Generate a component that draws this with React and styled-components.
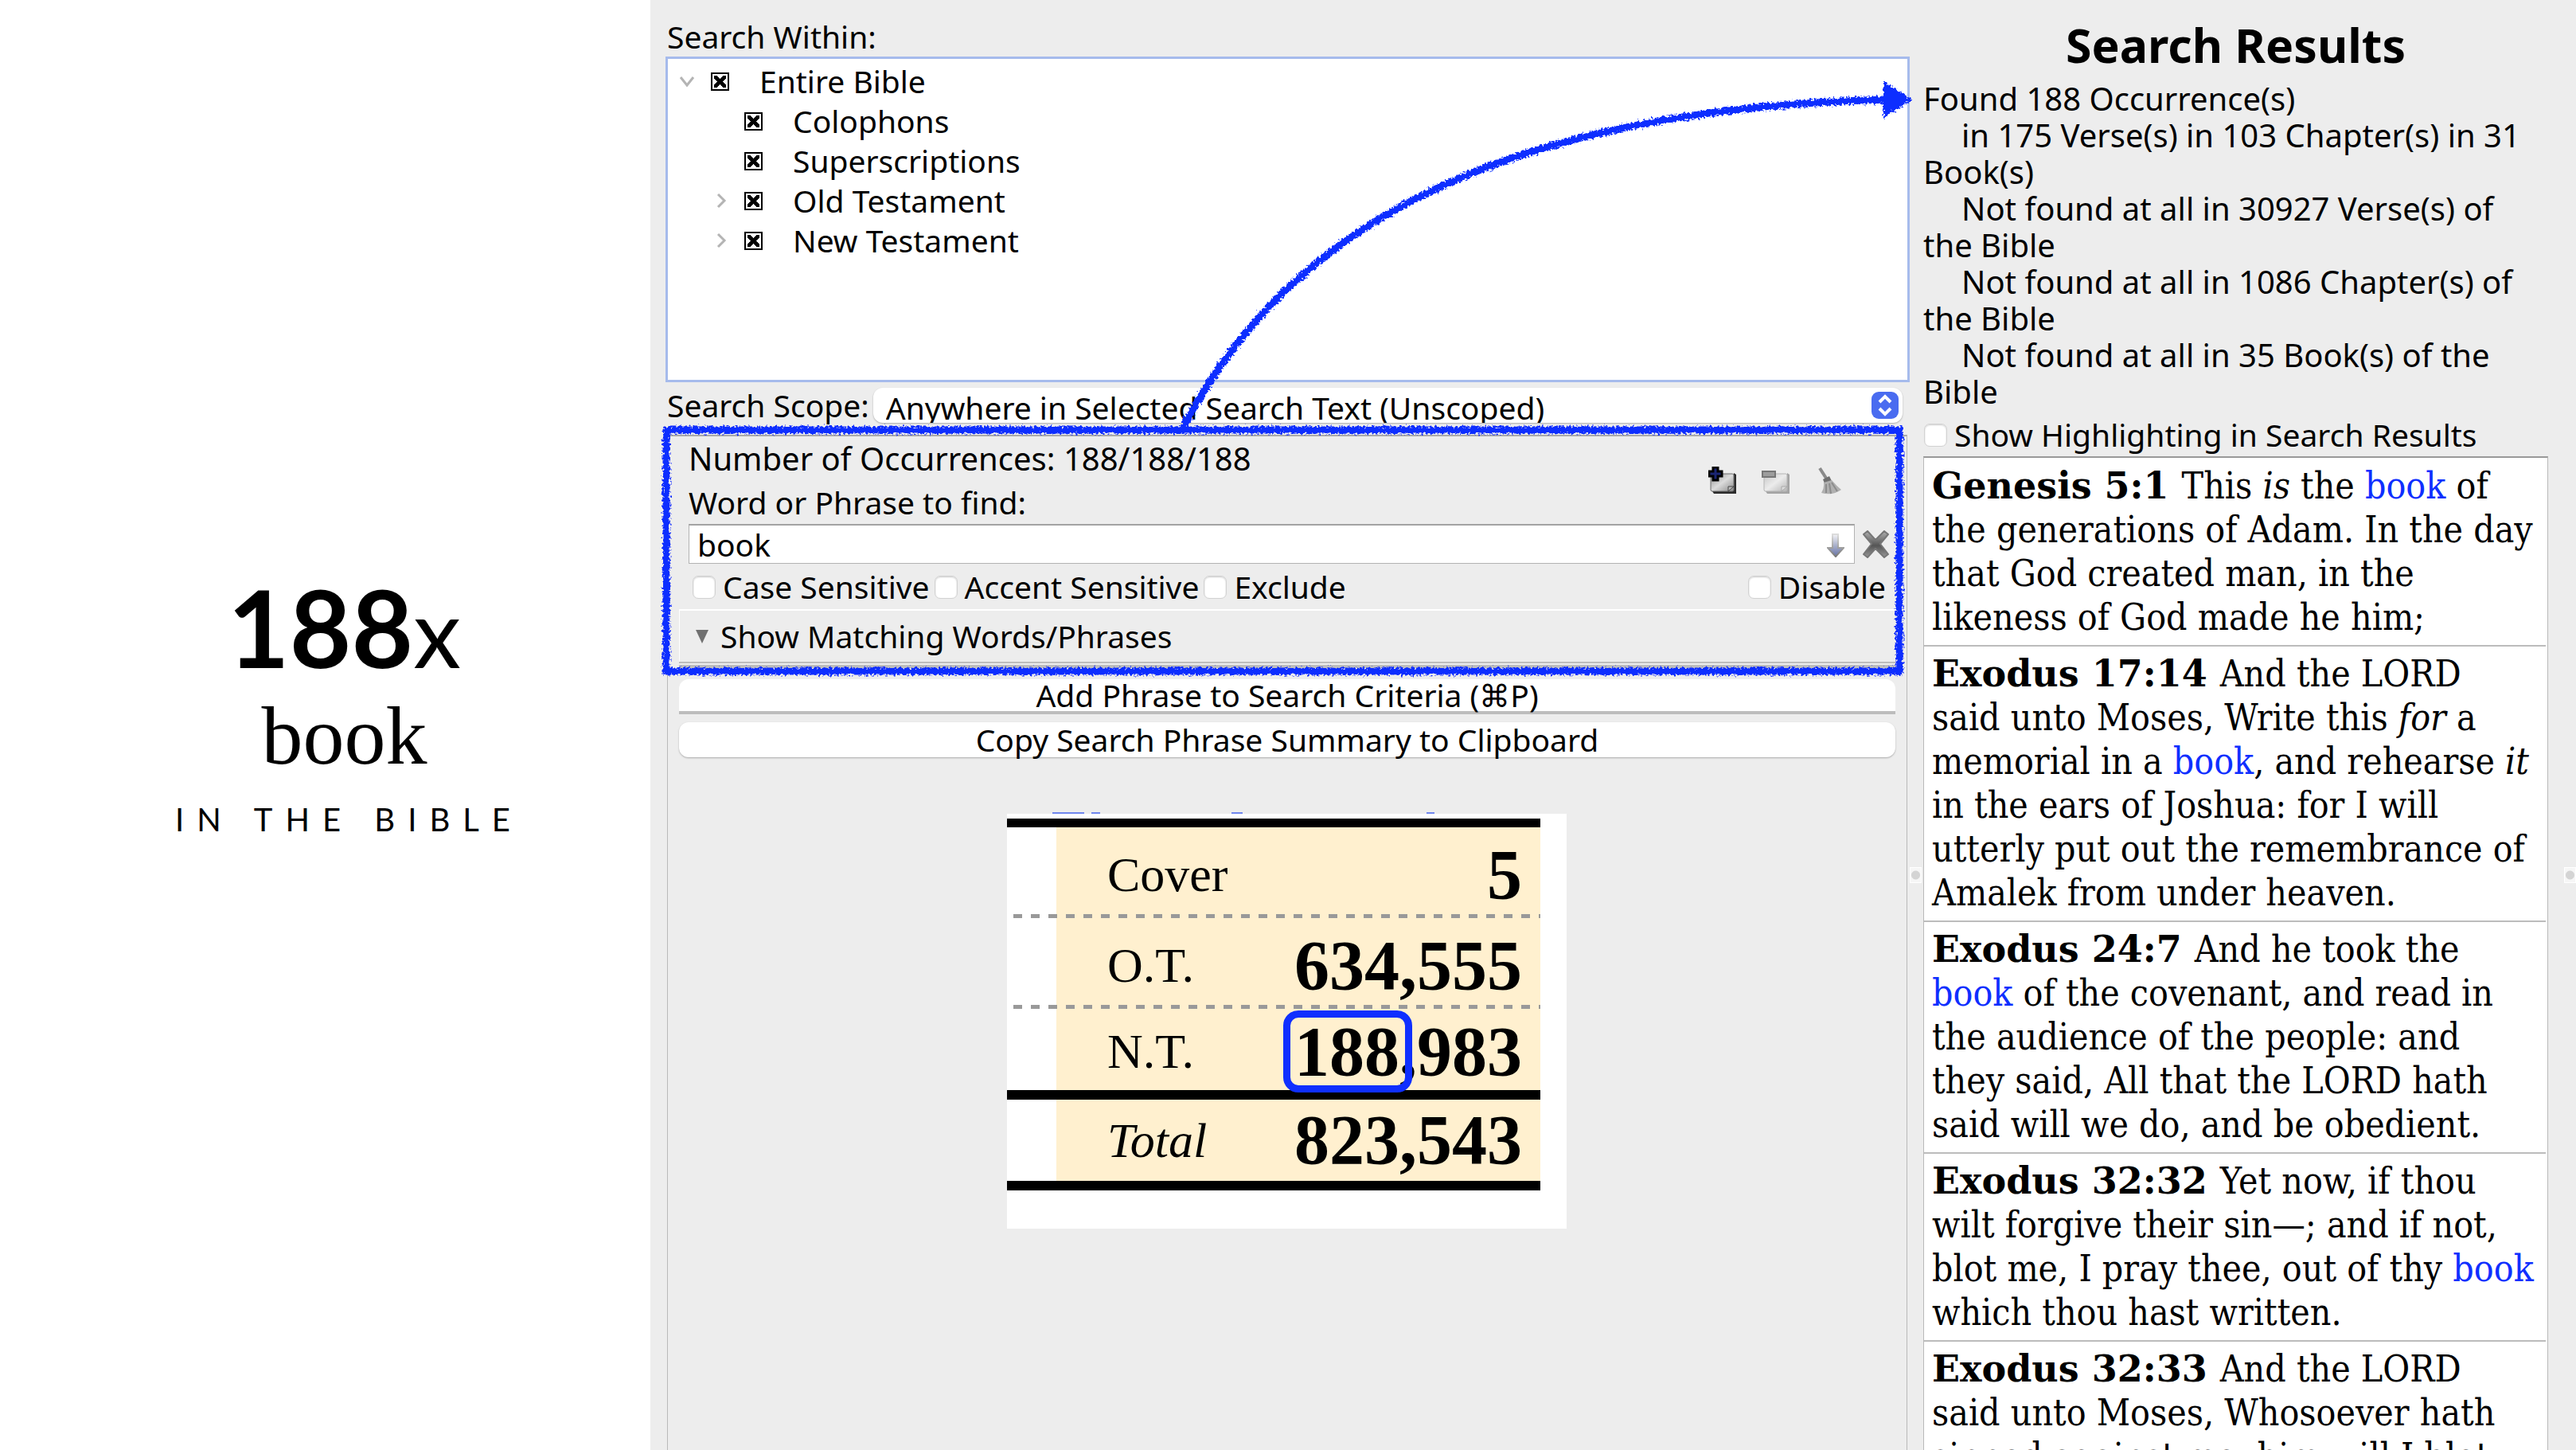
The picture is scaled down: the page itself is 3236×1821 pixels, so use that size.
import React from "react";
import styled, { createGlobalStyle, css } from "styled-components";

const UI_FONT = '"Noto Sans", "Open Sans", sans-serif';
const VERSE_FONT = '"DejaVu Serif Condensed", "DejaVu Serif", serif';
const REFERENCE_FONT = '"DejaVu Serif", serif';
const BOOK_FONT = '"Liberation Serif", serif';
const BLUE = "#0f2fff";

const GlobalStyle = createGlobalStyle`
  * { box-sizing: border-box; }
  body { margin: 0; background: #fff; }
  button, input, select { font: inherit; color: inherit; margin: 0; }
`;

const Page = styled.main`
  display: grid;
  grid-template-columns: minmax(0, 817fr) minmax(0, 1582fr) 17px minmax(0, 785fr) 35px;
  height: 100vh;
  overflow: hidden;
  background: #ededed;
  color: #000;
  font: 39px/46px ${UI_FONT};
`;

/* ---------- Title column ---------- */

const TitleColumn = styled.header`
  display: flex;
  flex-direction: column;
  align-items: center;
  justify-content: center;
  padding: 0 0 49px 48px;
  background: #fff;
`;

const Count = styled.h1`
  margin: 0;
  font: 700 134px/134px Lato, sans-serif;
`;

const Times = styled.span`
  font-size: 120px;
  font-weight: 400;
`;

const Word = styled.p`
  margin: 12px 0 30px;
  font: 104px/104px ${BOOK_FONT};
`;

const Tagline = styled.p`
  margin: 0;
  padding-left: 12px;
  font: 40px/46px Lato, sans-serif;
  letter-spacing: 16px;
  white-space: nowrap;
`;

/* ---------- Search column ---------- */

const SearchColumn = styled.section`
  position: relative;
  display: flex;
  flex-direction: column;
  min-width: 0;
  padding: 23px 0 0 19px;
`;

const Caption = styled.h2`
  margin: 0 0 2px 2px;
  font: inherit;
`;

const Tree = styled.ul`
  height: 409px;
  margin: 0;
  padding: 3px 0 0 14px;
  list-style: none;
  background: #fff;
  border: 3px solid #a6bbec;
`;

const Branch = styled.ul`
  margin: 0;
  padding: 0 0 0 42px;
  list-style: none;
`;

const TreeRow = styled.label`
  display: flex;
  align-items: center;
  height: 50px;
`;

const Chevron = styled.svg`
  width: 20px;
  height: 20px;
  margin-right: 20px;
  fill: none;
  stroke: #b4b4b4;
  stroke-width: 3;
`;

const TreeCheck = styled.input`
  appearance: none;
  width: 23px;
  height: 23px;
  margin-right: 38px;
  padding: 2px;
  border: 2px solid #000;
  background: #fff;
  &:checked {
    background:
      linear-gradient(45deg, transparent 37%, #000 37% 63%, transparent 63%) content-box,
      linear-gradient(135deg, transparent 37%, #000 37% 63%, transparent 63%) content-box,
      #fff;
  }
`;

const ScopeRow = styled.div`
  display: flex;
  align-items: center;
  height: 44px;
  margin: 7px 9px 15px 2px;
  gap: 5px;
`;

const SelectBox = styled.span`
  position: relative;
  flex: 1;
  display: flex;
`;

const Select = styled.select`
  appearance: none;
  flex: 1;
  height: 44px;
  padding: 2px 60px 0 16px;
  border: 0;
  border-radius: 12px;
  background: #fff;
  box-shadow: 0 1px 2px #aaa;
`;

const SelectArrows = styled.svg`
  position: absolute;
  right: 5px;
  top: 5px;
  width: 34px;
  height: 34px;
  pointer-events: none;
`;

const Panel = styled.div`
  flex: 1;
  margin: 0 3px 0 2px;
  padding: 0 14px;
  border: 1px solid #b9b9b9;
  border-top: 2px solid #a9a9a9;
  border-bottom: 0;
`;

const Criteria = styled.form`
  position: relative;
  margin-bottom: 14px;
`;

const Fields = styled.div`
  padding: 5px 7px 5px 12px;
  border-bottom: 2px solid #fff;
`;

const FieldHead = styled.div`
  display: flex;
  align-items: center;
  justify-content: space-between;
  margin-bottom: 4px;
`;

const FieldTitles = styled.div`
  display: grid;
  gap: 9px;
`;

const Occurrences = styled.span`
  font-size: 40px;
`;

const Tools = styled.div`
  display: flex;
  gap: 32px;
  margin-right: 59px;
`;

const IconButton = styled.button`
  display: block;
  flex: none;
  width: 35px;
  height: 35px;
  padding: 0;
  border: 0;
  background: none;
  svg { display: block; width: 35px; height: 35px; }
`;

const PhraseRow = styled.div`
  display: flex;
  align-items: center;
  gap: 9px;
`;

const PhraseBox = styled.span`
  position: relative;
  flex: 1;
  display: flex;
`;

const PhraseInput = styled.input`
  flex: 1;
  height: 50px;
  padding: 0 50px 0 10px;
  border: 1px solid #b3b3b3;
  border-top: 2px solid #a3a3a3;
  background: #fff;
  outline: 0;
`;

const History = styled.svg`
  position: absolute;
  right: 13px;
  top: 12px;
  width: 22px;
  height: 30px;
`;

const Checks = styled.div`
  display: flex;
  gap: 6px;
  margin-top: 6px;
  padding: 0 5px;
`;

const CheckLabel = styled.label`
  display: flex;
  align-items: center;
  gap: 9px;
  white-space: nowrap;
  ${(p) => p.$end && css`margin-left: auto;`}
`;

const Check = styled.input`
  appearance: none;
  flex: none;
  width: 29px;
  height: 29px;
  border: 1px solid #d2d2d2;
  border-radius: 7px;
  background: #fff;
  box-shadow: inset 0 1px 2px #ccc;
`;

const MatchToggle = styled.button`
  display: flex;
  align-items: center;
  gap: 15px;
  width: 100%;
  height: 64px;
  padding: 0 0 0 20px;
  border: 0;
  border-left: 1px solid #fff;
  background: none;
  text-align: left;
  svg { width: 16px; height: 17px; fill: #707070; }
`;

const Groove = styled.div`
  height: 8px;
  border-top: 2px solid #bdbdbd;
  border-bottom: 4px solid #bdbdbd;
`;

const Frame = styled.svg`
  position: absolute;
  left: -16px;
  top: -8px;
  width: calc(100% + 21px);
  height: calc(100% + 12px);
  overflow: visible;
  pointer-events: none;
  fill: none;
  stroke: ${BLUE};
  stroke-width: 9;
`;

const ArrowDrawing = styled.svg`
  position: absolute;
  left: 0;
  top: 0;
  width: 100%;
  height: 548px;
  overflow: visible;
  pointer-events: none;
`;

const WideButton = styled.button`
  display: block;
  width: 100%;
  height: 44px;
  padding: 0;
  border: 0;
  border-radius: 12px;
  background: #fff;
  line-height: 40px;
  box-shadow: 0 1px 2px #aaa;
  & + & { margin-top: 10px; }
  ${(p) => p.$ruled && css`
    border-bottom: 4px solid #bdbdbd;
    border-radius: 12px 12px 0 0;
    box-shadow: none;
  `}
`;

/* ---------- Totals table ---------- */

const TotalsCard = styled.figure`
  width: 703px;
  height: 523px;
  margin: 69px auto 0 412px;
  padding-bottom: 47px;
  background: #fff;
`;

const TopSlivers = styled.svg`
  display: block;
  width: 703px;
  height: 8px;
  background: linear-gradient(#ededed 2px, #fff 2px);
`;

const Totals = styled.table`
  width: 670px;
  border-spacing: 0;
  border-top: 11px solid #000;
  background: linear-gradient(90deg, #fff 62px, #fff0cf 62px);
  font: 62px/70px ${BOOK_FONT};
`;

const TotalsRow = styled.tr`
  height: 114px;
  ${(p) => p.$rule === "dash" && css`
    background: repeating-linear-gradient(90deg, transparent 0 8px, #999 8px 19px, transparent 19px 22px) 0 100% / 100% 5px no-repeat;
  `}
  ${(p) => p.$rule === "bar" && css`
    & > * { border-bottom: 12px solid #000; }
  `}
`;

const RowName = styled.th`
  padding: 4px 0 0 126px;
  font-weight: 400;
  text-align: left;
  ${(p) => p.$total && css`padding-top: 0; font-style: italic;`}
`;

const RowValue = styled.td`
  padding: ${(p) => (p.$total ? 0 : 6)}px 23px 0 0;
  font-size: 88px;
  font-weight: 700;
  text-align: right;
`;

const Ringed = styled.span`
  position: relative;
  &::after {
    content: "";
    position: absolute;
    inset: -3px -16px -3px -14px;
    border: 9px solid ${BLUE};
    border-radius: 19px;
  }
`;

/* ---------- Results column ---------- */

const Splitter = styled.div`
  display: flex;
  justify-content: ${(p) => (p.$end ? "flex-end" : "flex-start")};
  padding-top: 1089px;
`;

const Grip = styled.span`
  width: 15px;
  height: 20px;
  border: 1px solid #fff;
  background: radial-gradient(circle, #d4d4d4 5px, #f6f6f6 6px);
`;

const ResultsColumn = styled.section`
  display: flex;
  flex-direction: column;
  min-width: 0;
  min-height: 0;
  padding-top: 22px;
`;

const ResultsTitle = styled.h2`
  margin: 0 0 11px;
  font-size: 59px;
  line-height: 68px;
  text-align: center;
`;

const Summary = styled.p`
  margin: 0 0 8px;
  font-size: 40px;
`;

const SummaryLine = styled.span`
  display: block;
  text-indent: ${(p) => (p.$indent ? 48 : 0)}px;
`;

const Highlighting = styled.div`
  padding: 0 1px 4px;
`;

const Verses = styled.ol`
  flex: 1;
  min-height: 0;
  overflow: hidden;
  margin: 0;
  padding: 8px 0 0;
  list-style: none;
  border: 1px solid #b9b9b9;
  border-top: 2px solid #999;
  border-bottom: 0;
  background: #fff;
`;

const Verse = styled.li`
  margin-right: 2px;
  padding: 0 0 7px 10px;
  font: 46px/55px ${VERSE_FONT};
  & + & { padding-top: 7px; border-top: 2px solid #bcbcbc; }
`;

const VerseLine = styled.span`
  display: block;
  white-space: nowrap;
`;

const Reference = styled.b`
  font-family: ${REFERENCE_FONT};
`;

const Hit = styled.span`
  color: ${BLUE};
`;

/* ---------- Data ---------- */

const B = <Hit>book</Hit>;

const verses = [
  ["Genesis 5:1", [
    <>This <i>is</i> the {B} of</>,
    "the generations of Adam. In the day",
    "that God created man, in the",
    "likeness of God made he him;",
  ]],
  ["Exodus 17:14", [
    "And the LORD",
    <>said unto Moses, Write this <i>for</i> a</>,
    <>memorial in a {B}, and rehearse <i>it</i></>,
    "in the ears of Joshua: for I will",
    "utterly put out the remembrance of",
    "Amalek from under heaven.",
  ]],
  ["Exodus 24:7", [
    "And he took the",
    <>{B} of the covenant, and read in</>,
    "the audience of the people: and",
    "they said, All that the LORD hath",
    "said will we do, and be obedient.",
  ]],
  ["Exodus 32:32", [
    "Yet now, if thou",
    "wilt forgive their sin—; and if not,",
    <>blot me, I pray thee, out of thy {B}</>,
    "which thou hast written.",
  ]],
  ["Exodus 32:33", [
    "And the LORD",
    "said unto Moses, Whosoever hath",
    "sinned against me, him will I blot",
  ]],
];

const summary = [
  [false, "Found 188 Occurrence(s)"],
  [true, "in 175 Verse(s) in 103 Chapter(s) in 31"],
  [false, "Book(s)"],
  [true, "Not found at all in 30927 Verse(s) of"],
  [false, "the Bible"],
  [true, "Not found at all in 1086 Chapter(s) of"],
  [false, "the Bible"],
  [true, "Not found at all in 35 Book(s) of the"],
  [false, "Bible"],
];

const parts = [
  { name: "Colophons" },
  { name: "Superscriptions" },
  { name: "Old Testament", closed: true },
  { name: "New Testament", closed: true },
];

/* ---------- Pieces ---------- */

function TreeItem({ name, chevron }) {
  return (
    <TreeRow>
      <Chevron viewBox="0 0 20 20">
        {chevron && <path d={chevron} />}
      </Chevron>
      <TreeCheck type="checkbox" defaultChecked />
      {name}
    </TreeRow>
  );
}

function CheckItem({ children, end }) {
  return (
    <CheckLabel $end={end}>
      <Check type="checkbox" />
      {children}
    </CheckLabel>
  );
}

const PageIcon = ({ faded, children }) => (
  <svg viewBox="0 0 35 35">
    <defs>
      <linearGradient id={faded ? "sheetFaded" : "sheet"} x1="0" y1="0" x2="1" y2="1">
        <stop offset="0" stopColor={faded ? "#c6c6c6" : "#8f8f8f"} />
        <stop offset=".5" stopColor={faded ? "#ececec" : "#dcdcdc"} />
        <stop offset="1" stopColor={faded ? "#b5b5b5" : "#8a8a8a"} />
      </linearGradient>
    </defs>
    <path d="M5 31 L7 34 H35 V10 L32 8 V29 L30 31 Z" fill={faded ? "#a4a4a4" : "#2c2c2c"} />
    <rect x="3" y="9" width="29" height="22" rx="2" fill={`url(#${faded ? "sheetFaded" : "sheet"})`} stroke={faded ? "#b5b5b5" : "#6c6c6c"} />
    <path d="M25 31 V25 H32 Z" fill={faded ? "#ddd" : "#bbb"} stroke={faded ? "#aaa" : "#444"} />
    {children}
  </svg>
);

function SearchPanel() {
  return (
    <SearchColumn>
      <Caption>Search Within:</Caption>
      <Tree>
        <li>
          <TreeItem name="Entire Bible" chevron="M2 5 L10 15 L18 5" />
          <Branch>
            {parts.map((p) => (
              <li key={p.name}>
                <TreeItem name={p.name} chevron={p.closed ? "M7 2 L15 10 L7 18" : null} />
              </li>
            ))}
          </Branch>
        </li>
      </Tree>

      <ScopeRow>
        <label htmlFor="scope">Search Scope:</label>
        <SelectBox>
          <Select id="scope">
            <option>Anywhere in Selected Search Text (Unscoped)</option>
          </Select>
          <SelectArrows viewBox="0 0 34 34">
            <rect width="34" height="34" rx="9" fill="#4a6cf0" />
            <path d="M10 13 L17 6 L24 13 M10 21 L17 28 L24 21" fill="none" stroke="#fff" strokeWidth="4" />
          </SelectArrows>
        </SelectBox>
      </ScopeRow>

      <Panel>
        <Criteria onSubmit={(e) => e.preventDefault()}>
          <Fields>
            <FieldHead>
              <FieldTitles>
                <Occurrences>Number of Occurrences: 188/188/188</Occurrences>
                <label htmlFor="phrase">Word or Phrase to find:</label>
              </FieldTitles>
              <Tools>
                <IconButton type="button" aria-label="Add">
                  <PageIcon>
                    <path d="M6 1 H12 V6 H17 V12 H12 V17 H6 V12 H1 V6 H6 Z" fill="#1a2472" stroke="#000" strokeWidth="3" />
                  </PageIcon>
                </IconButton>
                <IconButton type="button" aria-label="Remove">
                  <PageIcon faded>
                    <rect x="1" y="6" width="16" height="7" fill="#9d9d9d" stroke="#777" strokeWidth="2" />
                  </PageIcon>
                </IconButton>
                <IconButton type="button" aria-label="Clear">
                  <svg viewBox="0 0 35 35">
                    <path d="M6 2 L15 16" stroke="#8a8a8a" strokeWidth="4" />
                    <path d="M10 16 L18 12 L21 18 L12 21 Z" fill="#6f6f6f" />
                    <path d="M11 20 L21 17 Q27 24 33 29 Q22 37 8 33 Q12 27 11 20 Z" fill="#b0b0b0" />
                    <path d="M14 22 L14 33 M18 21 L20 34 M21 20 L28 31" stroke="#8c8c8c" strokeWidth="2" />
                  </svg>
                </IconButton>
              </Tools>
            </FieldHead>
            <PhraseRow>
              <PhraseBox>
                <PhraseInput id="phrase" type="text" defaultValue="book" />
                <History viewBox="0 0 22 30">
                  <defs>
                    <linearGradient id="fall" x1="0" y1="0" x2="0" y2="1">
                      <stop offset="0" stopColor="#f4f4f6" />
                      <stop offset=".5" stopColor="#a9b0cc" />
                      <stop offset="1" stopColor="#6672a4" />
                    </linearGradient>
                    <linearGradient id="fallEdge" x1="0" y1="0" x2="0" y2="1">
                      <stop offset="0" stopColor="#ddd" />
                      <stop offset="1" stopColor="#777" />
                    </linearGradient>
                  </defs>
                  <path d="M7 1 H14 V18 H21 L11 29 L1 18 H7 Z" fill="url(#fall)" stroke="url(#fallEdge)" strokeWidth="2" />
                </History>
              </PhraseBox>
              <IconButton type="button" aria-label="Delete phrase">
                <svg viewBox="0 0 35 35">
                  <defs>
                    <linearGradient id="cross" x1="0" y1="0" x2="0" y2="1">
                      <stop offset="0" stopColor="#b0b0b0" />
                      <stop offset=".55" stopColor="#555" />
                      <stop offset="1" stopColor="#999" />
                    </linearGradient>
                  </defs>
                  <path d="M2 5 L7 1 L17 12 L28 1 L33 5 L23 17 L33 30 L28 34 L17 23 L7 34 L2 30 L12 17 Z" fill="url(#cross)" stroke="#777" strokeLinejoin="round" strokeWidth="2" />
                </svg>
              </IconButton>
            </PhraseRow>
            <Checks>
              <CheckItem>Case Sensitive</CheckItem>
              <CheckItem>Accent Sensitive</CheckItem>
              <CheckItem>Exclude</CheckItem>
              <CheckItem end>Disable</CheckItem>
            </Checks>
          </Fields>
          <MatchToggle type="button">
            <svg viewBox="0 0 16 17"><path d="M0 0 H16 L8 17 Z" /></svg>
            Show Matching Words/Phrases
          </MatchToggle>
          <Groove />
          <Frame>
            <rect width="100%" height="100%" filter="url(#chalk)" />
          </Frame>
        </Criteria>

        <WideButton type="button" $ruled>Add Phrase to Search Criteria (⌘P)</WideButton>
        <WideButton type="button">Copy Search Phrase Summary to Clipboard</WideButton>

        <TotalsCard>
          <TopSlivers viewBox="0 0 703 8">
            <path d="M57 1 H97 M106 1 H117 M282 1 H296 M527 1 H537" stroke="#6f86ee" strokeWidth="2" />
          </TopSlivers>
          <Totals>
            <tbody>
              <TotalsRow $rule="dash">
                <RowName scope="row">Cover</RowName>
                <RowValue>5</RowValue>
              </TotalsRow>
              <TotalsRow $rule="dash">
                <RowName scope="row">O.T.</RowName>
                <RowValue>634,555</RowValue>
              </TotalsRow>
              <TotalsRow $rule="bar">
                <RowName scope="row">N.T.</RowName>
                <RowValue><Ringed>188</Ringed>,983</RowValue>
              </TotalsRow>
              <TotalsRow $rule="bar">
                <RowName scope="row" $total>Total</RowName>
                <RowValue $total>823,543</RowValue>
              </TotalsRow>
            </tbody>
          </Totals>
        </TotalsCard>
      </Panel>

      <ArrowDrawing viewBox="0 0 1582 548" preserveAspectRatio="none">
        <defs>
          <filter id="chalk" filterUnits="userSpaceOnUse" x="-20" y="-20" width="1640" height="620">
            <feTurbulence type="fractalNoise" baseFrequency="0.35" numOctaves="2" seed="4" result="noise" />
            <feDisplacementMap in="SourceGraphic" in2="noise" scale="9" xChannelSelector="R" yChannelSelector="G" />
          </filter>
        </defs>
        <g filter="url(#chalk)">
          <path d="M669 537 C788 308 1033 138 1553 125" fill="none" stroke={BLUE} strokeWidth="9" />
          <path d="M1549 102 L1585 125 L1549 148 Z" fill={BLUE} />
        </g>
      </ArrowDrawing>
    </SearchColumn>
  );
}

export default function App() {
  return (
    <>
      <GlobalStyle />
      <Page>
        <TitleColumn>
          <Count>188<Times>x</Times></Count>
          <Word>book</Word>
          <Tagline>IN THE BIBLE</Tagline>
        </TitleColumn>

        <SearchPanel />

        <Splitter><Grip /></Splitter>

        <ResultsColumn>
          <ResultsTitle>Search Results</ResultsTitle>
          <Summary>
            {summary.map(([indent, text], i) => (
              <SummaryLine key={i} $indent={indent}>{text}</SummaryLine>
            ))}
          </Summary>
          <Highlighting>
            <CheckItem>Show Highlighting in Search Results</CheckItem>
          </Highlighting>
          <Verses>
            {verses.map(([reference, lines]) => (
              <Verse key={reference}>
                {lines.map((line, i) => (
                  <VerseLine key={i}>
                    {i === 0 && <Reference>{reference}{" "}</Reference>}
                    {line}
                  </VerseLine>
                ))}
              </Verse>
            ))}
          </Verses>
        </ResultsColumn>

        <Splitter $end><Grip /></Splitter>
      </Page>
    </>
  );
}
